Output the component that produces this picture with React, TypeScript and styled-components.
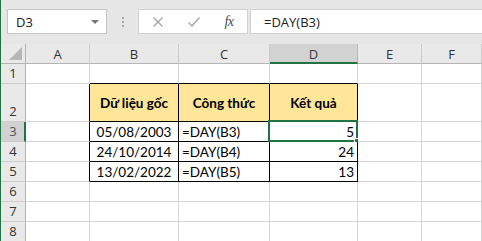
import React from 'react';
import styled, { createGlobalStyle } from 'styled-components';

const Global = createGlobalStyle`
  html, body { margin: 0; padding: 0; background: #fff; overflow: hidden; }
  body { font-family: Lato, "Liberation Sans", sans-serif; }
  * { box-sizing: border-box; }
`;

const Page = styled.div`
  width: 482px;
  height: 241px;
  overflow: hidden;
  display: flex;
  flex-direction: column;
  border-left: 1px solid #217346;
`;

const TopBar = styled.div`
  height: 44px;
  flex: none;
  background: #e6e6e6;
  display: flex;
  align-items: flex-start;
  padding: 9px 0 0 6px;
`;

const NameBox = styled.div`
  width: 100px;
  height: 25px;
  background: #fff;
  border: 1px solid #c6c6c6;
  display: flex;
  align-items: center;
  justify-content: space-between;
  padding: 0 7px 0 8px;
  font-family: "Open Sans", "Liberation Sans", sans-serif;
  font-size: 13px;
  color: #222;
`;

const Caret = styled.span`
  width: 0;
  height: 0;
  border-left: 4px solid transparent;
  border-right: 4px solid transparent;
  border-top: 4px solid #767676;
`;

const Grip = styled.div`
  width: 31px;
  height: 25px;
  display: flex;
  flex-direction: column;
  align-items: center;
  justify-content: center;
  gap: 2px;
`;

const GripDot = styled.span`
  width: 2px;
  height: 2px;
  background: #a8a8a8;
`;

const FxBox = styled.div`
  width: 110px;
  height: 25px;
  background: #fff;
  border: 1px solid #d2d2d2;
  display: flex;
  align-items: center;
  justify-content: space-around;
  padding: 0 2px 0 2px;
`;

const FxText = styled.span`
  font-family: "Liberation Serif", "DejaVu Serif", serif;
  font-style: italic;
  font-size: 14px;
  color: #4a4a4a;
  letter-spacing: -0.5px;
`;

const FormulaInput = styled.div`
  flex: 1;
  height: 25px;
  margin-left: 2px;
  background: #fff;
  border: 1px solid #d2d2d2;
  border-right: none;
  display: flex;
  align-items: center;
  padding-left: 13px;
  font-family: "Open Sans", "Liberation Sans", sans-serif;
  font-size: 13px;
  color: #222;
`;

const Sheet = styled.div`
  display: grid;
  grid-template-columns: 25px 64px 89px 91px 88px 64px 1fr;
  grid-template-rows: 20px 20px 38px 20px 20px 20px 20px 20px 20px;
`;

const ColHead = styled.div<{ $sel?: boolean }>`
  background: ${(p) => (p.$sel ? '#d2d2d2' : '#e9e9e9')};
  border-right: 1px solid ${(p) => (p.$sel ? '#b8b8b8' : '#cdcdcd')};
  border-bottom: ${(p) => (p.$sel ? '2px solid #217346' : '1px solid #b4b4b4')};
  display: flex;
  align-items: center;
  justify-content: center;
  font-family: "Open Sans", "Liberation Sans", sans-serif;
  font-size: 13px;
  color: ${(p) => (p.$sel ? '#3a3a3a' : '#333')};
  padding-top: ${(p) => (p.$sel ? '1px' : '0')};
`;

const Corner = styled.div`
  background: #e9e9e9;
  border-right: 1px solid #b4b4b4;
  border-bottom: 1px solid #b4b4b4;
  display: flex;
  align-items: flex-end;
  justify-content: flex-end;
  padding: 0 3px 3px 0;
`;

const CornerTri = styled.span`
  width: 0;
  height: 0;
  border-left: 13px solid transparent;
  border-bottom: 13px solid #b6b6b6;
`;

const RowHead = styled.div<{ $sel?: boolean }>`
  background: ${(p) => (p.$sel ? '#d2d2d2' : '#e9e9e9')};
  border-right: ${(p) => (p.$sel ? '2px solid #217346' : '1px solid #b4b4b4')};
  border-bottom: 1px solid #cdcdcd;
  display: flex;
  align-items: flex-end;
  justify-content: center;
  padding-bottom: 1px;
  padding-left: ${(p) => (p.$sel ? '1px' : '0')};
  font-family: "Open Sans", "Liberation Sans", sans-serif;
  font-size: 13px;
  color: ${(p) => (p.$sel ? '#555' : '#333')};
`;

const Cell = styled.div<{
  $r?: boolean;
  $b?: boolean;
  $fill?: boolean;
  $head?: boolean;
  $align?: 'left' | 'center' | 'right';
}>`
  position: relative;
  background: ${(p) => (p.$fill ? '#ffe699' : '#fff')};
  border-right: 1px solid ${(p) => (p.$r ? '#000' : '#d4d4d4')};
  border-bottom: 1px solid ${(p) => (p.$b ? '#000' : '#d4d4d4')};
  display: flex;
  align-items: ${(p) => (p.$head ? 'center' : 'flex-end')};
  justify-content: ${(p) =>
    p.$align === 'center' ? 'center' : p.$align === 'right' ? 'flex-end' : 'flex-start'};
  padding: 0 3px 0 3px;
  font-size: 13.5px;
  font-weight: ${(p) => (p.$head ? 700 : 400)};
  color: #000;
  white-space: nowrap;
  line-height: 18px;
`;

const Active = styled.div`
  position: absolute;
  left: -2px;
  top: -2px;
  right: -1px;
  bottom: -1px;
  border: 2px solid #217346;
  pointer-events: none;
`;

const Handle = styled.div`
  position: absolute;
  right: -4px;
  bottom: -4px;
  width: 6px;
  height: 6px;
  background: #217346;
  border: 1px solid #fff;
`;

type C = { t?: string; a?: 'left' | 'center' | 'right' };

const cols = ['A', 'B', 'C', 'D', 'E', 'F'];

const data: Record<number, C[]> = {
  2: [{}, { t: 'Dữ liệu gốc', a: 'center' }, { t: 'Công thức', a: 'center' }, { t: 'Kết quả', a: 'center' }, {}, {}],
  3: [{}, { t: '05/08/2003', a: 'center' }, { t: '=DAY(B3)' }, { t: '5', a: 'right' }, {}, {}],
  4: [{}, { t: '24/10/2014', a: 'center' }, { t: '=DAY(B4)' }, { t: '24', a: 'right' }, {}, {}],
  5: [{}, { t: '13/02/2022', a: 'center' }, { t: '=DAY(B5)' }, { t: '13', a: 'right' }, {}, {}],
};

const inTable = (r: number, c: number) => r >= 2 && r <= 5 && c >= 1 && c <= 3;

export default function App() {
  const rows = [1, 2, 3, 4, 5, 6, 7, 8];
  return (
    <>
      <Global />
      <Page>
        <TopBar>
          <NameBox>
            <span>D3</span>
            <Caret />
          </NameBox>
          <Grip>
            <GripDot />
            <GripDot />
            <GripDot />
          </Grip>
          <FxBox>
            <svg width="12" height="12" viewBox="0 0 12 12">
              <path d="M1.5 1.5 L10.5 10.5 M10.5 1.5 L1.5 10.5" stroke="#a6a6a6" strokeWidth="1.4" />
            </svg>
            <svg width="14" height="12" viewBox="0 0 14 12">
              <path d="M1.5 6.5 L5 10 L12.5 1.5" stroke="#a6a6a6" strokeWidth="1.4" fill="none" />
            </svg>
            <FxText>fx</FxText>
          </FxBox>
          <FormulaInput>=DAY(B3)</FormulaInput>
        </TopBar>
        <Sheet>
          <Corner>
            <CornerTri />
          </Corner>
          {cols.map((c) => (
            <ColHead key={c} $sel={c === 'D'}>
              {c}
            </ColHead>
          ))}
          {rows.map((r) => (
            <React.Fragment key={r}>
              <RowHead $sel={r === 3}>{r}</RowHead>
              {cols.map((_, ci) => {
                const cell = data[r]?.[ci] ?? {};
                const right = inTable(r, ci) || inTable(r, ci + 1);
                const bottom = inTable(r, ci) || inTable(r + 1, ci);
                return (
                  <Cell
                    key={ci}
                    $r={right}
                    $b={bottom}
                    $fill={r === 2 && inTable(r, ci)}
                    $head={r === 2}
                    $align={cell.a}
                  >
                    {cell.t}
                    {r === 3 && ci === 3 && (
                      <Active>
                        <Handle />
                      </Active>
                    )}
                  </Cell>
                );
              })}
            </React.Fragment>
          ))}
        </Sheet>
      </Page>
    </>
  );
}
